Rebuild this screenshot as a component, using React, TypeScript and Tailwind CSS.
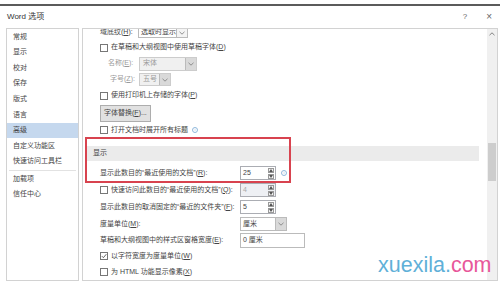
import { ReactNode } from "react";

const font = "font-['Liberation_Sans','Noto_Sans_CJK_SC',sans-serif]";

const sideItems = [
  "常规",
  "显示",
  "校对",
  "保存",
  "版式",
  "语言",
  "高级",
  "自定义功能区",
  "快速访问工具栏",
];

function K({ k }: { k: string }) {
  return <span className="underline">{k}</span>;
}

function Check({ checked = false }: { checked?: boolean }) {
  return (
    <span className="w-[8px] h-[8px] border border-[#777] bg-white flex items-center justify-center shrink-0">
      {checked && (
        <svg width="6" height="6" viewBox="0 0 6 6">
          <path d="M0.8 3.1 L2.4 4.7 L5.3 1.2" fill="none" stroke="#555" strokeWidth="0.9" />
        </svg>
      )}
    </span>
  );
}

function Info() {
  return (
    <span className="w-[6px] h-[6px] rounded-full border border-[#8fb8dc] text-[#8fb8dc] text-[4px] leading-none flex items-center justify-center">
      i
    </span>
  );
}

function Arrow({ dark = false }: { dark?: boolean }) {
  return (
    <span
      className={`w-[11px] shrink-0 self-stretch border-l border-[#bbb] flex items-center justify-center ${
        dark ? "bg-[#d9d9d9]" : "bg-[#f4f4f4]"
      }`}
    >
      <svg width="6" height="4" viewBox="0 0 6 4">
        <path d="M0.5 0.8 L3 3.2 L5.5 0.8" fill="none" stroke="#777" strokeWidth="0.8" />
      </svg>
    </span>
  );
}

function Spin({ value, disabled = false }: { value: string; disabled?: boolean }) {
  return (
    <div
      className={`w-[36px] h-[14px] border border-[#abadb3] flex items-stretch ${
        disabled ? "bg-[#eef0f4] text-[#aaa]" : "bg-white"
      }`}
    >
      <span className="flex-1 pl-[2px] flex items-center">{value}</span>
      <span className="w-[7px] flex flex-col gap-[1px] py-[1px] pr-[1px]">
        <span className="flex-1 border border-[#999] bg-[#f4f4f4] flex items-center justify-center">
          <svg width="4" height="3" viewBox="0 0 4 3">
            <path d="M0 3 L2 0 L4 3 Z" fill="#555" />
          </svg>
        </span>
        <span className="flex-1 border border-[#999] bg-[#f4f4f4] flex items-center justify-center">
          <svg width="4" height="3" viewBox="0 0 4 3">
            <path d="M0 0 L2 3 L4 0 Z" fill="#555" />
          </svg>
        </span>
      </span>
    </div>
  );
}

function Row({ h, children, className = "" }: { h: string; children: ReactNode; className?: string }) {
  return <div className={`${h} flex items-center pl-[17px] whitespace-nowrap ${className}`}>{children}</div>;
}

function CheckRow({ h, checked, children, info }: { h: string; checked?: boolean; children: ReactNode; info?: boolean }) {
  return (
    <Row h={h}>
      <Check checked={checked} />
      <span className="ml-[3px]">{children}</span>
      {info && (
        <span className="ml-[4px]">
          <Info />
        </span>
      )}
    </Row>
  );
}

export default function App() {
  return (
    <div className={`w-[500px] h-[281px] bg-white relative overflow-hidden text-[#444] text-[7px] ${font}`}>
      <div className="h-[4px]" />
      <div className="h-[1.5px] bg-[#5b5b5b]" />
      <div className="h-[22.5px] flex items-center pl-[7px] pr-[8px]">
        <span className="text-[8px] text-[#333]">Word 选项</span>
        <span className="ml-auto text-[8px] text-[#666] mr-[19px]">?</span>
        <span className="text-[10px] text-[#666] leading-none">×</span>
      </div>

      <div className="flex pl-[6px] h-[253px]">
        <div className="w-[73px] border border-[#d2d2d2] flex flex-col">
          {sideItems.map((s) => (
            <div
              key={s}
              className={`h-[15.6px] flex items-center pl-[6px] ${s === "高级" ? "bg-[#c5d8ee]" : ""}`}
            >
              {s}
            </div>
          ))}
          <div className="h-[1px] bg-[#e2e2e2] mx-[2px] mt-[1px]" />
          <div className="h-[15.6px] flex items-center pl-[6px]">加载项</div>
          <div className="h-[15.6px] flex items-center pl-[6px]">信任中心</div>
        </div>

        <div className="ml-[3px] mr-[2px] flex-1 border border-[#d2d2d2] flex overflow-hidden">
          <div className="flex-1 flex flex-col -mt-[4px]">
            <Row h="h-[15px]">
              <span className="w-[38px]">
                域底纹(<K k="H" />):
              </span>
              <span className="w-[50px] h-[10px] border border-[#bbb] flex items-stretch">
                <span className="flex-1 pl-[2px] flex items-center">选取时显示</span>
                <Arrow />
              </span>
            </Row>
            <CheckRow h="h-[15px]">
              在草稿和大纲视图中使用草稿字体(<K k="D" />)
            </CheckRow>
            <Row h="h-[17px]" className="text-[#9a9a9a]">
              <span className="pl-[8px] w-[39px]">
                名称(<K k="E" />):
              </span>
              <span className="w-[58px] h-[14px] border border-[#ccc] bg-[#f0f0f0] flex items-stretch">
                <span className="flex-1 pl-[3px] flex items-center">宋体</span>
                <Arrow dark />
              </span>
            </Row>
            <Row h="h-[15px]" className="text-[#9a9a9a]">
              <span className="pl-[10px] w-[39px]">
                字号(<K k="Z" />):
              </span>
              <span className="w-[32px] h-[13px] border border-[#ccc] bg-[#f0f0f0] flex items-stretch">
                <span className="flex-1 pl-[3px] flex items-center">五号</span>
                <Arrow dark />
              </span>
            </Row>
            <CheckRow h="h-[17px]">
              使用打印机上存储的字体(<K k="P" />)
            </CheckRow>
            <Row h="h-[18px]">
              <span className="h-[17px] px-[3px] border border-[#adadad] bg-[#e1e1e1] flex items-center">
                <span>
                  字体替换(<K k="F" />)...
                </span>
              </span>
            </Row>
            <CheckRow h="h-[16px]" info>
              打开文档时展开所有标题
            </CheckRow>

            <div className="mt-[8px] ml-[4px] mr-[8px] h-[15px] bg-[#ebebeb] flex items-center pl-[6px]">
              显示
            </div>

            <Row h="h-[18px]" className="mt-[3px]">
              <span className="w-[140px]">
                显示此数目的“最近使用的文档”(<K k="R" />):
              </span>
              <Spin value="25" />
              <span className="ml-[5px]">
                <Info />
              </span>
            </Row>
            <Row h="h-[16px]">
              <Check />
              <span className="ml-[3px] w-[129px]">
                快速访问此数目的“最近使用的文档”(<K k="Q" />):
              </span>
              <Spin value="4" disabled />
            </Row>
            <Row h="h-[18px]">
              <span className="w-[140px]">
                显示此数目的取消固定的“最近的文件夹”(<K k="F" />):
              </span>
              <Spin value="5" />
            </Row>
            <Row h="h-[16px]">
              <span className="w-[140px]">
                度量单位(<K k="M" />):
              </span>
              <span className="w-[47px] h-[14px] border border-[#bbb] flex items-stretch">
                <span className="flex-1 pl-[2px] flex items-center">厘米</span>
                <Arrow dark />
              </span>
            </Row>
            <Row h="h-[16px]">
              <span className="w-[140px]">
                草稿和大纲视图中的样式区窗格宽度(<K k="E" />):
              </span>
              <span className="w-[65px] h-[15px] border border-[#bbb] pl-[2px] flex items-center">0 厘米</span>
            </Row>
            <CheckRow h="h-[16px]" checked>
              以字符宽度为度量单位(<K k="W" />)
            </CheckRow>
            <CheckRow h="h-[16px]">
              为 HTML 功能显示像素(<K k="X" />)
            </CheckRow>
          </div>

          <div className="w-[10px] bg-[#f0f0f0] flex flex-col items-center">
            <svg width="6" height="4" viewBox="0 0 6 4" className="mt-[3px]">
              <path d="M0.5 3.2 L3 0.8 L5.5 3.2" fill="none" stroke="#666" strokeWidth="0.8" />
            </svg>
            <div className="mt-[107px] w-[8px] h-[38px] bg-[#cdcdcd]" />
          </div>
        </div>
      </div>

      <div className="absolute left-[85px] top-[137px] w-[206px] h-[46px] border-2 border-[#d8434f]" />

      <div className="absolute left-[378px] top-[255px] text-[21.5px] leading-none font-['Liberation_Sans',sans-serif]">
        <span className="text-[#5fb0d8]">xuexila.</span>
        <span className="text-[#e8579a]">com</span>
      </div>
    </div>
  );
}
